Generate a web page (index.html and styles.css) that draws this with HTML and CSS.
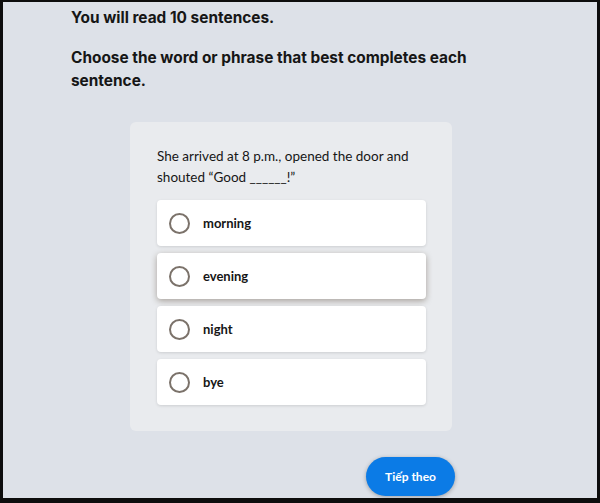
FILE: index.html
```html
<!DOCTYPE html>
<html lang="vi">
<head>
    <meta charset="UTF-8">
    <meta name="viewport" content="width=device-width, initial-scale=1.0">
    <title>Reading test</title>
    <link rel="stylesheet" href="styles.css">
</head>
<body>

    <div class="screen">
        <div class="intro">
            <h1>You will read 10 sentences.</h1>
            <h2>Choose the word or phrase that best completes each sentence.</h2>
        </div>

        <div class="card">
            <p class="question">She arrived at 8 p.m., opened the door and shouted “Good ______!”</p>
            <div class="options">
                <label class="option"><span class="radio"></span>morning</label>
                <label class="option hover"><span class="radio"></span>evening</label>
                <label class="option"><span class="radio"></span>night</label>
                <label class="option"><span class="radio"></span>bye</label>
            </div>
        </div>

        <div class="footer">
            <button class="next-btn">Tiếp theo</button>
        </div>
    </div>

</body>
</html>
```

FILE: styles.css
```css
* {
    box-sizing: border-box;
}
body {
    margin: 0;
    font-family: Lato, "Noto Sans", sans-serif;
    color: #161616;
}
.screen {
    width: 600px;
    height: 503px;
    background-color: #dde1e8;
    border-style: solid;
    border-color: #0d0d0d;
    border-width: 2px 3px 5px 3px;
    overflow: hidden;
}
.intro {
    padding: 4px 0 0 68px;
    width: 500px;
}
.intro h1,
.intro h2 {
    font-family: Inter, Lato, sans-serif;
    font-size: 15.4px;
    line-height: 23px;
    font-weight: bold;
    margin: 0;
}
.intro h2 {
    margin-top: 17px;
}
.card {
    width: 322px;
    margin: 30px 0 0 127px;
    padding: 24px 26px 26px 27px;
    background-color: #e9ebee;
    border-radius: 6px;
}
.question {
    margin: 0 0 12px;
    font-size: 13.5px;
    line-height: 21px;
}
.options {
    display: flex;
    flex-direction: column;
    gap: 7px;
}
.option {
    display: flex;
    align-items: center;
    gap: 13px;
    height: 46px;
    padding-left: 12px;
    background: white;
    border-radius: 4px;
    font-size: 13px;
    font-weight: bold;
    box-shadow: 0 1px 3px rgba(0, 0, 0, 0.12);
    cursor: pointer;
}
.option.hover {
    box-shadow: 0 2px 6px rgba(70, 50, 30, 0.4);
}
.radio {
    width: 21px;
    height: 21px;
    border: 2px solid #7b726a;
    border-radius: 50%;
}
.footer {
    padding: 26px 0 0 363px;
}
.next-btn {
    width: 89px;
    height: 39px;
    border: none;
    border-radius: 20px;
    background-color: #0b7be6;
    color: white;
    font-family: Lato, "Noto Sans", sans-serif;
    font-size: 12px;
    font-weight: bold;
    box-shadow: 0 1px 4px rgba(0, 0, 0, 0.3);
    cursor: pointer;
}
```
